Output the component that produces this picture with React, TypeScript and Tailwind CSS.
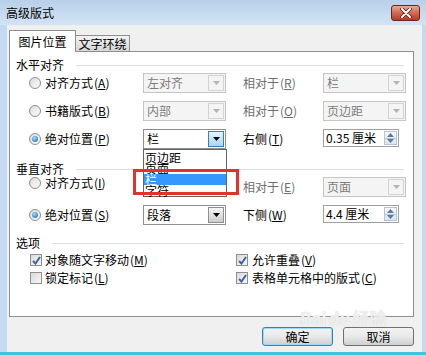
import React from 'react';

const Key: React.FC<{ k: string }> = ({ k }) => (
  <span className="ml-[1px]">
    (<span className="underline underline-offset-1">{k}</span>)
  </span>
);

const Arrow: React.FC<{ color: string; up?: boolean }> = ({ color, up }) => (
  <svg width="7" height="4" viewBox="0 0 7 4">
    <path d={up ? 'M0 4h7L3.5 0z' : 'M0 0h7L3.5 4z'} fill={color} />
  </svg>
);

type ComboVariant = 'disabled' | 'normal' | 'hover';

const Combo: React.FC<{ value?: string; variant: ComboVariant }> = ({ value, variant }) => {
  const box =
    variant === 'disabled'
      ? 'border-[#c5c5c5] bg-[#f4f4f4] text-[#7d7d7d]'
      : 'border-[#8e8f8f] bg-white text-black';
  const btn =
    variant === 'disabled'
      ? 'border-[#d3d3d3] bg-[#f4f4f4]'
      : variant === 'hover'
        ? 'border-[#3c7fb1] bg-linear-to-b from-[#e5f4fc] to-[#a9d6f3]'
        : 'border-[#8e8f8f] bg-linear-to-b from-[#f4f4f4] to-[#cdcdcd]';
  return (
    <div className={`flex h-[20px] w-[83px] items-center border ${box}`}>
      <span className="flex-1 pl-[3px] leading-none">{value}</span>
      <span className={`mr-[1px] flex h-[16px] w-[16px] items-center justify-center border ${btn}`}>
        <Arrow color={variant === 'disabled' ? '#b4b4b4' : '#000'} />
      </span>
    </div>
  );
};

const Spin: React.FC<{ value: string }> = ({ value }) => (
  <div className="flex h-[18px] w-[76px] items-center self-start border border-[#a0a0a0] bg-white">
    <span className="flex-1 pl-[2px] leading-none whitespace-pre">{value}</span>
    <span className="mr-[1px] flex h-[14px] w-[13px] flex-col border border-[#b7c4d3] bg-linear-to-b from-[#f5f8fb] to-[#dbe4ee]">
      <span className="flex flex-1 items-center justify-center">
        <Arrow color="#5a7aa5" up />
      </span>
      <span className="flex flex-1 items-center justify-center border-t border-[#b7c4d3]">
        <Arrow color="#5a7aa5" />
      </span>
    </span>
  </div>
);

const Radio: React.FC<{ checked?: boolean }> = ({ checked }) => (
  <span className="flex h-[12px] w-[12px] items-center justify-center rounded-full border border-[#8f8f8f] bg-linear-to-br from-[#dcdcdc] to-[#fbfbfb]">
    {checked && (
      <span className="h-[6px] w-[6px] rounded-full bg-[radial-gradient(circle_at_40%_35%,#a6dcff,#0d5ca8)]" />
    )}
  </span>
);

const Check: React.FC<{ checked?: boolean }> = ({ checked }) => (
  <span className="flex h-[12px] w-[12px] items-center justify-center border border-[#8f8f8f] bg-linear-to-br from-[#dadada] to-[#f7f7f7]">
    {checked && (
      <svg width="9" height="9" viewBox="0 0 9 9">
        <path d="M1 5l2.5 2.5L8 1" stroke="#3e63a8" strokeWidth="2" fill="none" />
      </svg>
    )}
  </span>
);

const GroupHeader: React.FC<{ title: string; className?: string }> = ({ title, className }) => (
  <div className={`flex h-[14px] items-center pl-[6px] pr-[9px] ${className ?? ''}`}>
    <span className="leading-none">{title}</span>
    <span className="ml-[12px] h-px flex-1 bg-[#d5dfe5]" />
  </div>
);

const Row: React.FC<{
  radio: boolean;
  label: string;
  k: string;
  combo: React.ReactNode;
  label2: React.ReactNode;
  right: React.ReactNode;
  className?: string;
  leftClass?: string;
}> = ({ radio, label, k, combo, label2, right, className, leftClass }) => (
  <div className={`ml-[19px] flex h-[20px] items-center ${className ?? ''}`}>
    <div className={`flex w-[114px] items-center gap-[4px] ${leftClass ?? ''}`}>
      <Radio checked={radio} />
      <span className="leading-none">
        {label}
        <Key k={k} />
      </span>
    </div>
    {combo}
    <div className="w-[17px]" />
    <div className="w-[80px] leading-none">{label2}</div>
    {right}
  </div>
);

const Btn: React.FC<{ label: string; primary?: boolean }> = ({ label, primary }) => (
  <button
    className={`flex h-[19px] w-[71px] items-center justify-center rounded-[3px] border bg-linear-to-b from-[#f3f3f3] via-[#e9e9e9] to-[#cfcfcf] leading-none ${
      primary ? 'border-[#3c7fb1] shadow-[inset_0_0_0_1px_#9fd8f6]' : 'border-[#707070]'
    }`}
  >
    {label}
  </button>
);

export default function App() {
  return (
    <div className="relative flex h-[355px] w-[426px] flex-col overflow-hidden bg-[#c4daf0] text-[12px] text-black font-['Noto_Sans_CJK_SC',sans-serif]">
      {/* title bar */}
      <div className="flex h-[25px] items-center justify-between bg-linear-to-b from-[#b8d0e9] to-[#d3e3f4] pl-[6px] pr-[6px]">
        <span className="leading-none">高级版式</span>
        <span className="flex h-[16px] w-[29px] items-center justify-center rounded-[3px] border border-[#6b2417] bg-linear-to-b from-[#e8a895] via-[#d06a52] to-[#b33c26]">
          <svg width="12" height="10" viewBox="0 0 12 10">
            <path d="M2 1l8 8M10 1L2 9" stroke="#5a2016" strokeWidth="3.6" strokeLinecap="round" />
            <path d="M2 1l8 8M10 1L2 9" stroke="#ffffff" strokeWidth="2" strokeLinecap="round" />
          </svg>
        </span>
      </div>

      {/* client */}
      <div className="ml-[7px] mr-[4px] flex flex-1 flex-col bg-[#f0f0f0] pl-[2px] pr-[8px]">
        {/* tabs */}
        <div className="mt-[5px] flex items-end">
          <div className="relative z-10 flex h-[22px] w-[67px] items-center justify-center border border-b-0 border-[#8e8f8f] bg-white pt-[1px]">
            <span className="leading-none">图片位置</span>
          </div>
          <div className="mb-[1px] flex h-[16px] w-[54px] items-center justify-center border border-b-0 border-l-0 border-[#8e8f8f] bg-linear-to-b from-[#f3f3f3] to-[#d6d6d6]">
            <span className="leading-none">文字环绕</span>
          </div>
        </div>

        {/* panel */}
        <div className="-mt-[1px] flex h-[266px] flex-col border border-[#8e8f8f] bg-white pt-[6px]">
          <GroupHeader title="水平对齐" />
          <Row
            className="mt-[1px]"
            radio={false}
            label="对齐方式"
            k="A"
            combo={<Combo value="左对齐" variant="disabled" />}
            label2={<span className="text-[#6d6d6d]">相对于<Key k="R" /></span>}
            right={<Combo value="栏" variant="disabled" />}
          />
          <Row
            className="mt-[8px]"
            radio={false}
            label="书籍版式"
            k="B"
            combo={<Combo value="内部" variant="disabled" />}
            label2={<span className="text-[#6d6d6d]">相对于<Key k="O" /></span>}
            right={<Combo value="页边距" variant="disabled" />}
          />
          <Row
            className="mt-[8px]"
            radio
            label="绝对位置"
            k="P"
            combo={<Combo value="栏" variant="hover" />}
            label2={<span>右侧<Key k="T" /></span>}
            right={<Spin value="0.35 厘米" />}
          />

          <GroupHeader title="垂直对齐" className="mt-[13px]" />
          <Row
            className="mt-[1px]"
            leftClass="mb-[8px]"
            radio={false}
            label="对齐方式"
            k="I"
            combo={<Combo value="顶端" variant="disabled" />}
            label2={<span className="text-[#6d6d6d]">相对于<Key k="E" /></span>}
            right={<Combo value="页面" variant="disabled" />}
          />
          <Row
            className="mt-[8px]"
            radio
            label="绝对位置"
            k="S"
            combo={<Combo value="段落" variant="normal" />}
            label2={<span>下侧<Key k="W" /></span>}
            right={<Spin value="4.4 厘米" />}
          />

          <GroupHeader title="选项" className="mt-[11px]" />
          <div className="mt-[3px] ml-[20px] grid grid-cols-[206px_1fr] gap-y-[4px]">
            <div className="flex h-[14px] items-center gap-[3px]">
              <Check checked />
              <span className="leading-none">
                对象随文字移动<Key k="M" />
              </span>
            </div>
            <div className="flex h-[14px] items-center gap-[4px]">
              <Check checked />
              <span className="leading-none">
                允许重叠<Key k="V" />
              </span>
            </div>
            <div className="flex h-[14px] items-center gap-[3px]">
              <Check />
              <span className="leading-none">
                锁定标记<Key k="L" />
              </span>
            </div>
            <div className="flex h-[14px] items-center gap-[4px]">
              <Check checked />
              <span className="leading-none">
                表格单元格中的版式<Key k="C" />
              </span>
            </div>
          </div>
        </div>

        {/* buttons */}
        <div className="mt-[10px] flex justify-end gap-[10px]">
          <Btn label="确定" primary />
          <Btn label="取消" />
        </div>
      </div>
      <div className="h-[3px] bg-[#3fc4dc]" />

      {/* open dropdown list */}
      <div className="absolute left-[143px] top-[149px] z-20 h-[48px] w-[84px] border border-[#646464] bg-white pt-[2px]">
        <div className="h-[11px] pl-[1px] leading-[11px]">页边距</div>
        <div className="h-[11px] pl-[1px] leading-[11px]">页面</div>
        <div className="relative z-10 h-[11px] bg-[#3399ff] pl-[1px] leading-[11px] text-white">栏</div>
        <div className="h-[11px] pl-[1px] leading-[11px]">字符</div>
      </div>

      {/* annotation */}
      <div className="absolute left-[133px] top-[169px] z-30 h-[26px] w-[106px] border-[3px] border-[#e3312b]" />

      {/* watermark */}
      <div className="pointer-events-none absolute left-[300px] top-[309px] z-30 flex items-center gap-[2px] text-[17px] font-bold leading-none text-white/70 [text-shadow:0_0_1px_#c8c8c8]">
        <span>Bai</span>
        <span>du</span>
        <span>经验</span>
      </div>
    </div>
  );
}
